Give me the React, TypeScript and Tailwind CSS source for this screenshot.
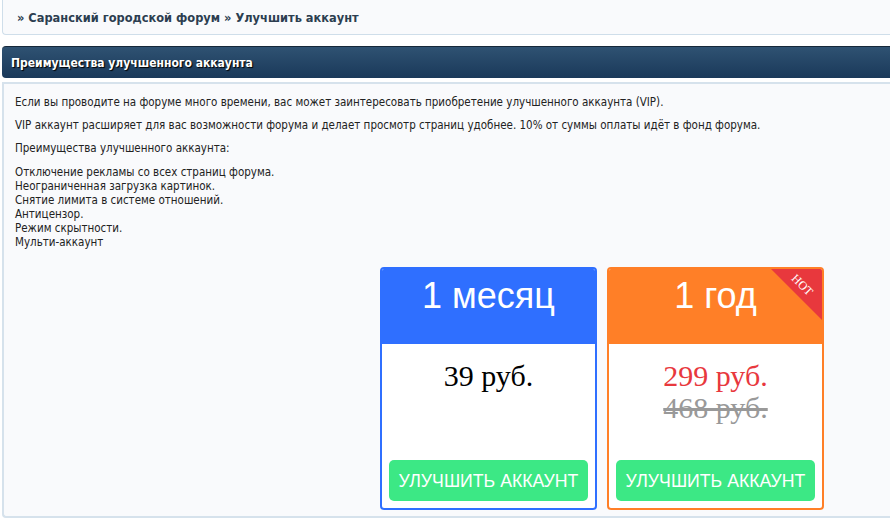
import React from "react";

const tahoma = { fontFamily: '"DejaVu Sans Condensed", "DejaVu Sans", Tahoma, sans-serif' };

function Card({
  title,
  color,
  children,
  hot,
}: {
  title: string;
  color: "blue" | "orange";
  children: React.ReactNode;
  hot?: boolean;
}) {
  const border = color === "blue" ? "border-[#2f6fff]" : "border-[#ff7f27]";
  const bg = color === "blue" ? "bg-[#2f6fff]" : "bg-[#ff7f27]";
  return (
    <div className={`relative flex h-[243px] w-[217px] flex-col overflow-hidden rounded-[4px] border-2 bg-white ${border}`}>
      <div className={`flex h-[75px] items-start justify-center pt-[7px] ${bg}`}>
        <span className="text-[36px] leading-[40px] text-white" style={{ fontFamily: '"Liberation Sans", Arial, sans-serif' }}>
          {title}
        </span>
      </div>
      {hot && (
        <div className="absolute right-0 top-0 h-[51px] w-[51px]">
          <div
            className="absolute inset-0 bg-[#e8383d]"
            style={{ clipPath: "polygon(0 0, 100% 0, 100% 100%)" }}
          />
          <span
            className="absolute left-[19px] top-[10px] rotate-45 text-[12px] leading-[12px] text-white"
            style={{ fontFamily: '"Liberation Serif", "Times New Roman", serif' }}
          >
            HOT
          </span>
        </div>
      )}
      <div className="flex flex-1 flex-col items-center pt-[16px]" style={{ fontFamily: '"Liberation Serif", "Times New Roman", serif' }}>
        {children}
      </div>
      <div className="px-[7px] pb-[7px]">
        <button
          className="flex h-[41px] w-full items-center justify-center rounded-[5px] bg-[#3ce885] text-[17.7px] text-white"
          style={{ fontFamily: '"Liberation Sans", Arial, sans-serif' }}
        >
          УЛУЧШИТЬ АККАУНТ
        </button>
      </div>
    </div>
  );
}

export default function App() {
  return (
    <div className="h-[519px] w-full overflow-hidden bg-white">
      <div className="w-[1204px] pl-[2px]" style={tahoma}>
        <div className="h-[35px] rounded-bl-[4px] border-b border-l border-[#cfdeea] bg-[#f9fafc] pl-[14px] pt-[5px]">
          <span className="text-[12.7px] font-bold leading-[16px] text-[#2c3e50]">
            » Саранский городской форум » Улучшить аккаунт
          </span>
        </div>
        <div className="mt-[11px] flex h-[32px] items-center rounded-l-[4px] border-t border-[#16283a] bg-gradient-to-b from-[#2f5272] to-[#1a395a] pl-[9px]">
          <span
            className="text-[12px] font-bold text-white"
            style={{ textShadow: "1px 1px 1px #000" }}
          >
            Преимущества улучшенного аккаунта
          </span>
        </div>
        <div className="mt-[4px] h-[436px] rounded-bl-[4px] border-b-2 border-l-2 border-t-2 border-[#d6e2ec] bg-[#f9fafc] pl-[11px] pt-[11px] text-[11.5px] leading-[14px] text-[#222]">
          <p>Если вы проводите на форуме много времени, вас может заинтересовать приобретение улучшенного аккаунта (VIP).</p>
          <p className="mt-[9px]">
            VIP аккаунт расширяет для вас возможности форума и делает просмотр страниц удобнее. 10% от суммы оплаты идёт в фонд форума.
          </p>
          <p className="mt-[9px]">Преимущества улучшенного аккаунта:</p>
          <div className="mt-[10px]">
            <div>Отключение рекламы со всех страниц форума.</div>
            <div>Неограниченная загрузка картинок.</div>
            <div>Снятие лимита в системе отношений.</div>
            <div>Антицензор.</div>
            <div>Режим скрытности.</div>
            <div>Мульти-аккаунт</div>
          </div>
          <div className="mt-[18px] flex justify-center gap-[10px] pr-[15px]">
            <Card title="1 месяц" color="blue">
              <span className="text-[30px] leading-[32px] text-black">39 руб.</span>
            </Card>
            <Card title="1 год" color="orange" hot>
              <span className="text-[30px] leading-[32px] text-[#e8383d]">299 руб.</span>
              <span className="text-[30px] leading-[32px] text-[#999] line-through decoration-[3px]">468 руб.</span>
            </Card>
          </div>
        </div>
      </div>
    </div>
  );
}
